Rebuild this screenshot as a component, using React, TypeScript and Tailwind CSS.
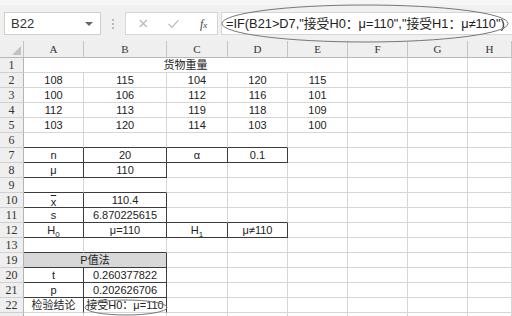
import clsx from 'clsx';
import type { ReactNode } from 'react';

const FONT = { fontFamily: '"Liberation Sans", "Noto Sans CJK SC", sans-serif' };
const SERIF = { fontFamily: '"Liberation Serif", "Noto Sans CJK SC", serif' };

const COLS = ['A', 'B', 'C', 'D', 'E', 'F', 'G', 'H'];

interface CellProps {
  children?: ReactNode;
  span?: number;
  r?: boolean;
  b?: boolean;
  className?: string;
}

const Cell = ({ children, span, r, b, className }: CellProps) => (
  <div
    className={clsx(
      'flex items-center justify-center border-r border-b whitespace-nowrap overflow-visible text-[11px] text-[#222]',
      span === 2 && 'col-span-2',
      span === 5 && 'col-span-5',
      r ? 'border-r-[#3c3c3c]' : 'border-r-[#d6d6d6]',
      b ? 'border-b-[#3c3c3c]' : 'border-b-[#d6d6d6]',
      className
    )}
  >
    {children}
  </div>
);

const RowHead = ({ n }: { n: number }) => (
  <div
    className="flex items-center justify-center border-r border-b border-r-[#b4b4b4] border-b-[#d0d0d0] bg-[#efefef] text-[12px] text-[#333]"
    style={SERIF}
  >
    {n}
  </div>
);

const Empty = ({ count }: { count: number }) => (
  <>
    {Array.from({ length: count }).map((_, i) => (
      <Cell key={i} />
    ))}
  </>
);

const H = ({ sub }: { sub: string }) => (
  <span>
    H<sub className="text-[8px] align-[-1px]">{sub}</sub>
  </span>
);

export default function App() {
  const data = [
    ['108', '115', '104', '120', '115'],
    ['100', '106', '112', '116', '101'],
    ['112', '113', '119', '118', '109'],
    ['103', '120', '114', '103', '100'],
  ];

  return (
    <div className="relative w-[512px] h-[316px] overflow-hidden bg-white" style={FONT}>
      {/* formula bar */}
      <div className="h-[41px] bg-[#f0f0f0] border-t-[5px] border-t-[#f6f6f6] pt-[7px] flex items-start">
        <div className="ml-[4px] w-[97px] h-[23px] bg-white border border-[#cfcfcf] flex items-center px-[6px]">
          <span className="text-[13px] text-[#333]">B22</span>
          <span className="ml-auto mr-[1px] w-0 h-0 border-l-[4px] border-r-[4px] border-t-[4px] border-l-transparent border-r-transparent border-t-[#666]" />
        </div>
        <div className="w-[24px] h-[23px] flex flex-col items-center justify-center gap-[2px]">
          <span className="w-[2px] h-[2px] bg-[#bbb]" />
          <span className="w-[2px] h-[2px] bg-[#bbb]" />
          <span className="w-[2px] h-[2px] bg-[#bbb]" />
        </div>
        <div className="relative w-[93px] h-[23px] bg-white border border-[#d6d6d6] flex items-center">
          <svg width="92" height="21" viewBox="0 0 92 21">
            <path d="M14 7 L21 14 M21 7 L14 14" stroke="#b9b9b9" strokeWidth="1.2" fill="none" />
            <path d="M43 11 L46.5 14.5 L53 7" stroke="#b9b9b9" strokeWidth="1.2" fill="none" />
          </svg>
          <span className="absolute left-[74px] top-[2px] text-[12px] italic text-[#444]" style={SERIF}>
            f<span className="text-[9px]">x</span>
          </span>
        </div>
        <div className="ml-[3px] flex-1 h-[23px] bg-white border border-[#d6d6d6] border-r-0 flex items-center pl-[4px]">
          <span className="text-[12.8px] text-[#222] whitespace-nowrap">
            =IF(B21&gt;D7,"接受H0：μ=110","接受H1：μ≠110")
          </span>
        </div>
      </div>

      {/* sheet */}
      <div className="grid grid-cols-[24px_60px_83px_61px_60px_60px_60px_60px_1fr] grid-rows-[17px] auto-rows-[15px]">
        {/* header row */}
        <div className="relative bg-[#efefef] border-r border-b border-r-[#c4c4c4] border-b-[#b8b8b8]">
          <svg className="absolute right-[2px] bottom-[2px]" width="9" height="9" viewBox="0 0 9 9">
            <path d="M9 0 L9 9 L0 9 Z" fill="#c2c2c2" />
          </svg>
        </div>
        {COLS.map((c) => (
          <div
            key={c}
            className="flex items-center justify-center bg-[#efefef] border-r border-b border-r-[#c4c4c4] border-b-[#b8b8b8] text-[11px] text-[#333]"
            style={SERIF}
          >
            {c}
          </div>
        ))}

        {/* row 1 */}
        <RowHead n={1} />
        <Cell span={5}>货物重量</Cell>
        <Empty count={3} />

        {data.map((row, i) => (
          <div key={i} className="contents">
            <RowHead n={i + 2} />
            {row.map((v, j) => (
              <Cell key={j}>{v}</Cell>
            ))}
            <Empty count={3} />
          </div>
        ))}

        {/* row 6 */}
        <RowHead n={6} />
        <Cell b />
        <Cell b />
        <Cell b />
        <Cell b />
        <Empty count={4} />

        {/* row 7 */}
        <RowHead n={7} />
        <Cell r b>n</Cell>
        <Cell r b>20</Cell>
        <Cell r b>α</Cell>
        <Cell r b>0.1</Cell>
        <Empty count={4} />

        {/* row 8 */}
        <RowHead n={8} />
        <Cell r b>μ</Cell>
        <Cell r b>110</Cell>
        <Empty count={6} />

        {/* row 9 */}
        <RowHead n={9} />
        <Cell b />
        <Cell b />
        <Empty count={6} />

        {/* row 10 */}
        <RowHead n={10} />
        <Cell r b>
          <span className="overline relative top-[2px]">x</span>
        </Cell>
        <Cell r b>110.4</Cell>
        <Empty count={6} />

        {/* row 11 */}
        <RowHead n={11} />
        <Cell r b>s</Cell>
        <Cell r b>6.870225615</Cell>
        <Cell b />
        <Cell b />
        <Empty count={4} />

        {/* row 12 */}
        <RowHead n={12} />
        <Cell r b>
          <H sub="0" />
        </Cell>
        <Cell r b>μ=110</Cell>
        <Cell r b>
          <H sub="1" />
        </Cell>
        <Cell r b>μ≠110</Cell>
        <Empty count={4} />

        {/* row 13 */}
        <RowHead n={13} />
        <Cell b />
        <Cell b />
        <Empty count={6} />

        {/* row 19 */}
        <RowHead n={19} />
        <Cell span={2} r b className="bg-[#d8d8d8]">
          P值法
        </Cell>
        <Empty count={6} />

        {/* row 20 */}
        <RowHead n={20} />
        <Cell r b>t</Cell>
        <Cell r b>0.260377822</Cell>
        <Empty count={6} />

        {/* row 21 */}
        <RowHead n={21} />
        <Cell r b>p</Cell>
        <Cell r b>0.202626706</Cell>
        <Empty count={6} />

        {/* row 22 */}
        <RowHead n={22} />
        <Cell r>检验结论</Cell>
        <Cell r>接受H0：μ=110</Cell>
        <Empty count={6} />

        <RowHead n={23} />
        <Empty count={8} />
      </div>

      {/* hand-drawn annotation rings */}
      <svg className="absolute left-0 top-0 pointer-events-none" width="512" height="316">
        <ellipse cx="365" cy="23.5" rx="143" ry="18.5" fill="none" stroke="#777" strokeWidth="1" />
        <ellipse cx="126" cy="307.5" rx="41" ry="7.5" fill="none" stroke="#777" strokeWidth="1" />
      </svg>
    </div>
  );
}
